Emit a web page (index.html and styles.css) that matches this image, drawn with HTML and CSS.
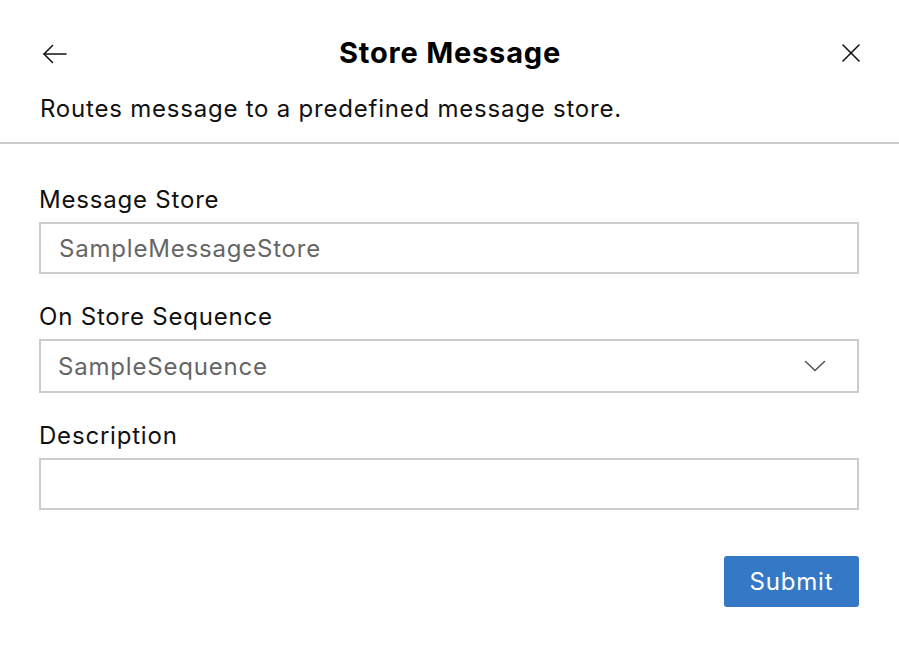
FILE: index.html
```html
<!DOCTYPE html>
<html lang="en">
<head>
<meta charset="utf-8">
<title>Store Message</title>
<link rel="stylesheet" href="styles.css">
</head>
<body>
<div class="panel">
  <header class="header">
    <div class="title-row">
      <button class="icon-btn back" aria-label="Back">
        <svg width="26" height="20" viewBox="0 0 26 20" fill="none" stroke="#111" stroke-width="1.5" stroke-linecap="round" stroke-linejoin="round">
          <path d="M2 10H24"/>
          <path d="M10.5 1.5L2 10L10.5 18.5"/>
        </svg>
      </button>
      <h1 class="title">Store Message</h1>
      <button class="icon-btn close" aria-label="Close">
        <svg width="18" height="18" viewBox="0 0 18 18" fill="none" stroke="#111" stroke-width="1.6" stroke-linecap="round">
          <path d="M1 1L17 17"/>
          <path d="M17 1L1 17"/>
        </svg>
      </button>
    </div>
    <p class="subtitle">Routes message to a predefined message store.</p>
  </header>
  <form class="form">
    <div class="field">
      <label class="label">Message Store</label>
      <div class="input"><span class="value">SampleMessageStore</span></div>
    </div>
    <div class="field">
      <label class="label">On Store Sequence</label>
      <div class="input select">
        <span class="value">SampleSequence</span>
        <svg class="chevron" width="22" height="12" viewBox="0 0 22 12" fill="none" stroke="#555" stroke-width="1.6" stroke-linecap="round" stroke-linejoin="round">
          <path d="M1.5 1.5L11 10.5L20.5 1.5"/>
        </svg>
      </div>
    </div>
    <div class="field">
      <label class="label">Description</label>
      <div class="input"></div>
    </div>
    <div class="actions">
      <button type="button" class="submit">Submit</button>
    </div>
  </form>
</div>
</body>
</html>
```

FILE: styles.css
```css
* { box-sizing: border-box; }
html, body {
  margin: 0;
  padding: 0;
  background: #ffffff;
}
body {
  font-family: Inter, "Noto Sans", "Liberation Sans", sans-serif;
  color: #111;
  width: 899px;
  height: 649px;
  overflow: hidden;
}
.header {
  padding: 36px 39px 18px 40px;
  border-bottom: 2px solid #cacaca;
}
.title-row {
  display: grid;
  grid-template-columns: 1fr auto 1fr;
  align-items: center;
  height: 34px;
}
.icon-btn {
  background: none;
  border: none;
  padding: 0;
  display: flex;
  align-items: center;
  cursor: pointer;
}
.back { justify-self: start; margin-left: 2px; margin-top: 2px; }
.close { justify-self: end; margin-right: 0; }
.title {
  margin: 0;
  font-size: 29px;
  font-weight: 700;
  line-height: 34px;
  color: #000;
  letter-spacing: 0.8px;
}
.subtitle {
  margin: 24px 0 0 0;
  font-size: 24px;
  line-height: 30px;
  color: #111;
  letter-spacing: 0.78px;
}
.form {
  padding: 41px 40px 0 39px;
  display: flex;
  flex-direction: column;
  gap: 28px;
}
.field {
  display: flex;
  flex-direction: column;
  gap: 7px;
}
.label {
  font-size: 24px;
  line-height: 30px;
  color: #111;
  letter-spacing: 0.8px;
}
.input {
  height: 52px;
  border: 2px solid #cccccc;
  background: #fff;
  display: flex;
  align-items: center;
  padding: 0 18px;
  font-size: 24px;
  color: #666;
  letter-spacing: 0.8px;
}
.select {
  height: 54px;
  padding: 0 31px 0 17px;
  justify-content: space-between;
}
.field-last { margin-top: -1px; }
.chevron { flex: none; }
.actions {
  display: flex;
  justify-content: flex-end;
  margin-top: 18px;
}
.submit {
  width: 135px;
  height: 51px;
  background: #3579c6;
  color: #fff;
  border: none;
  border-radius: 3px;
  font-family: Inter, "Noto Sans", "Liberation Sans", sans-serif;
  font-size: 24px;
  letter-spacing: 0.8px;
  padding: 0;
  cursor: pointer;
}
```
